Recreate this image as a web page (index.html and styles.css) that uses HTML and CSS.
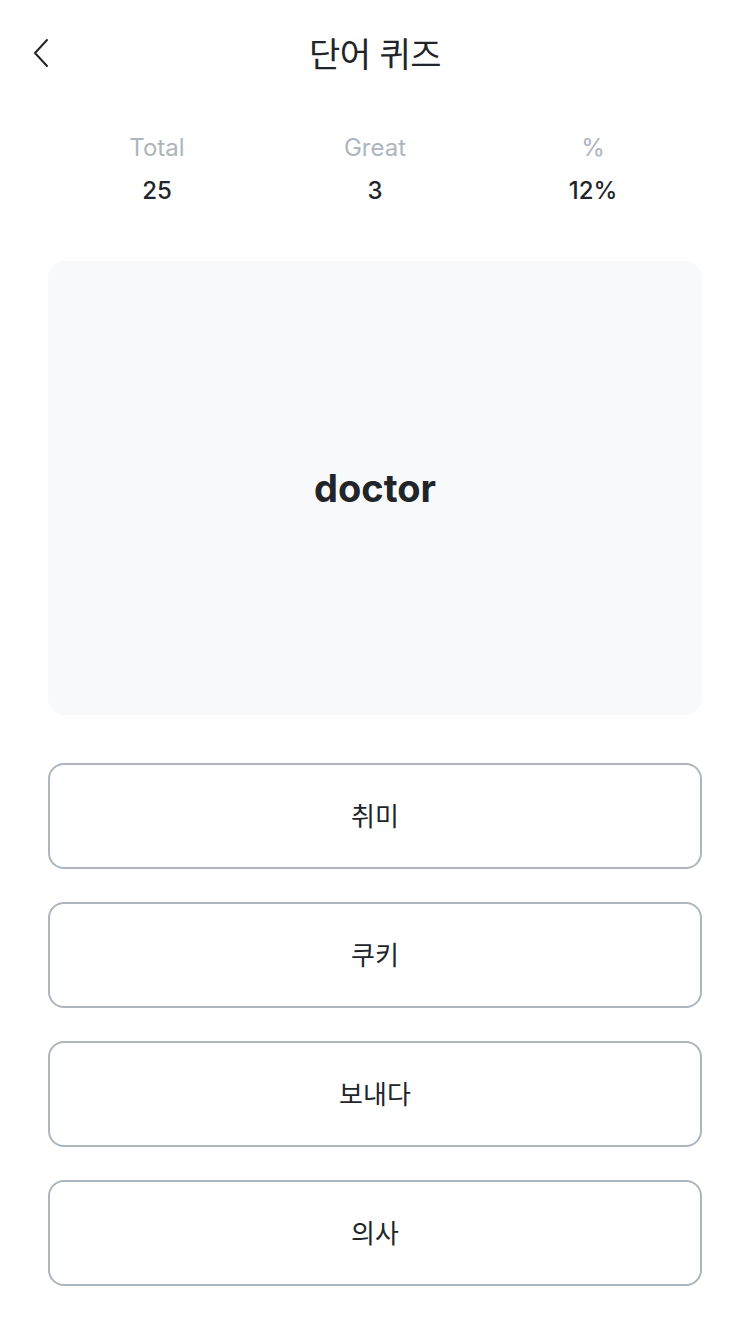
FILE: index.html
```html
<!DOCTYPE html>
<html lang="ko">
<head>
<meta charset="utf-8">
<link rel="stylesheet" href="styles.css">
</head>
<body>
<div class="page">
  <header class="header">
    <button class="back" aria-label="back">
      <svg width="18" height="30" viewBox="0 0 18 30"><path d="M15 2 L3 15 L15 28" fill="none" stroke="#212529" stroke-width="2" stroke-linecap="round" stroke-linejoin="round"/></svg>
    </button>
    <h1 class="title">단어 퀴즈</h1>
  </header>
  <section class="stats">
    <div class="stat"><div class="label">Total</div><div class="value">25</div></div>
    <div class="stat"><div class="label">Great</div><div class="value">3</div></div>
    <div class="stat"><div class="label">%</div><div class="value">12%</div></div>
  </section>
  <section class="card"><span class="word">doctor</span></section>
  <section class="options">
    <button class="option">취미</button>
    <button class="option">쿠키</button>
    <button class="option">보내다</button>
    <button class="option">의사</button>
  </section>
</div>
</body>
</html>
```
FILE: styles.css
```css
* { box-sizing: border-box; }
html, body { margin: 0; padding: 0; background: #fff; }
body {
  font-family: Inter, "Noto Sans CJK KR", sans-serif;
  color: #212529;
}
.page {
  width: 750px;
  padding: 0 48px;
}
.header {
  position: relative;
  height: 110px;
  display: flex;
  align-items: center;
  justify-content: center;
}
.back {
  position: absolute;
  left: -16px;
  top: 38px;
  background: none;
  border: 0;
  padding: 0;
  width: 18px;
  height: 30px;
  display: flex;
}
.title {
  margin: 0;
  font-size: 34px;
  font-weight: 400;
  line-height: 1;
  letter-spacing: -0.5px;
}
.stats {
  display: grid;
  grid-template-columns: repeat(3, 1fr);
  padding-top: 22px;
  height: 151px;
}
.stat {
  display: flex;
  flex-direction: column;
  align-items: center;
  gap: 11px;
}
.label {
  font-size: 24px;
  line-height: 32px;
  color: #adb5bd;
}
.value {
  font-size: 24px;
  line-height: 32px;
  font-weight: 500;
}
.card {
  height: 454px;
  background: #f8f9fa;
  border-radius: 16px;
  display: flex;
  align-items: center;
  justify-content: center;
}
.word {
  font-size: 38px;
  font-weight: 700;
}
.options {
  display: flex;
  flex-direction: column;
  gap: 33px;
  padding-top: 48px;
}
.option {
  height: 106px;
  padding: 0 0 4px;
  border: 2px solid #adb5bd;
  border-radius: 16px;
  background: #fff;
  font-family: Inter, "Noto Sans CJK KR", sans-serif;
  font-size: 26px;
  color: #212529;
}
```
